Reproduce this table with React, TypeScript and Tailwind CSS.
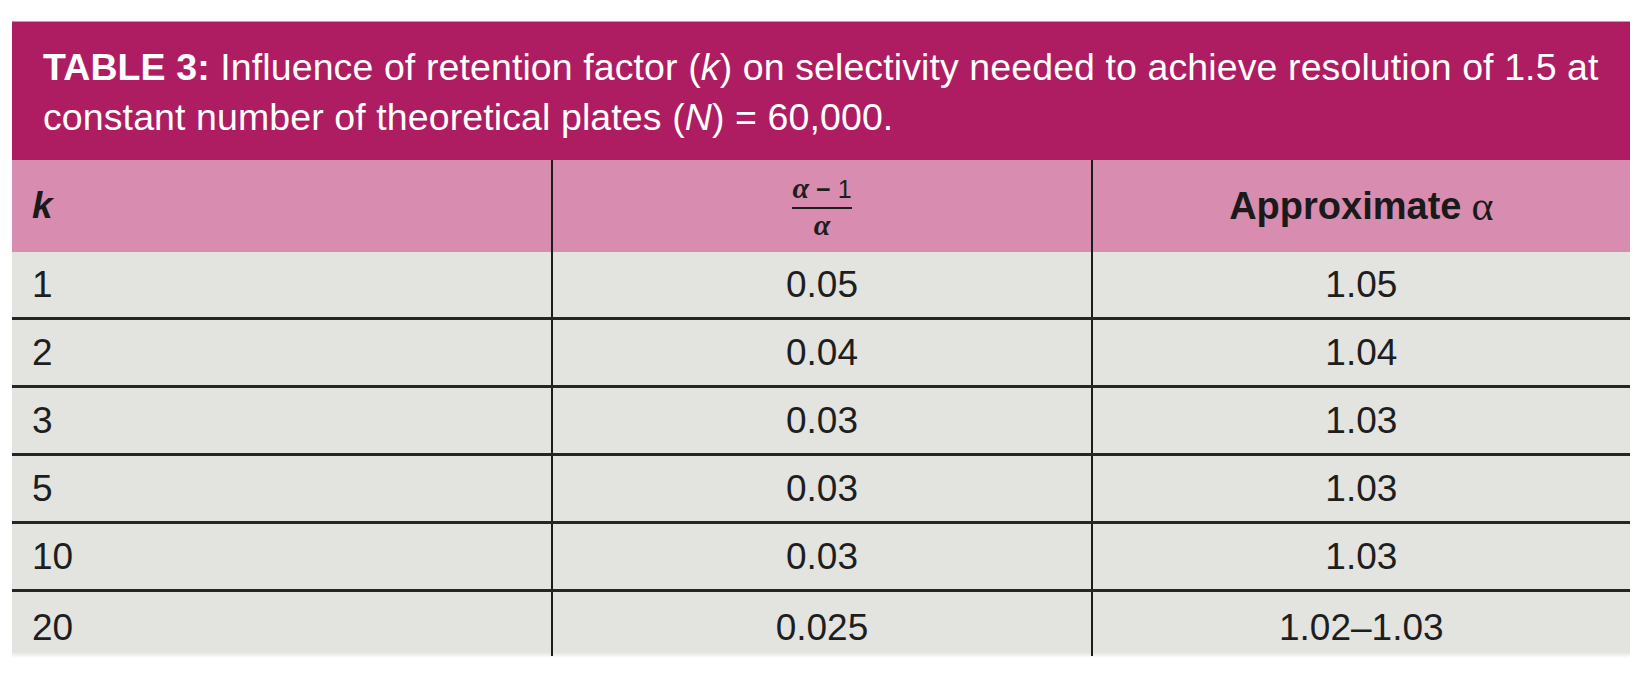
const rows = [
  { k: '1', ratio: '0.05', alpha: '1.05' },
  { k: '2', ratio: '0.04', alpha: '1.04' },
  { k: '3', ratio: '0.03', alpha: '1.03' },
  { k: '5', ratio: '0.03', alpha: '1.03' },
  { k: '10', ratio: '0.03', alpha: '1.03' },
  { k: '20', ratio: '0.025', alpha: '1.02–1.03' },
];

const sans = "font-['Liberation_Sans',Arial,sans-serif]";
const serif = "font-['Liberation_Serif','Times_New_Roman',serif]";

function Fraction() {
  return (
    <span className="inline-flex flex-col items-center leading-none text-[#1e1e1e]">
      <span className="flex items-baseline gap-[7px] border-b-2 border-[#1e1e1e] pb-[4px] text-[25px]">
        <span className={`${serif} text-[30px] font-bold italic`}>α</span>
        <span className="font-bold">−</span>
        <span>1</span>
      </span>
      <span className={`${serif} pt-[1px] text-[30px] font-bold italic`}>α</span>
    </span>
  );
}

export default function App() {
  return (
    <div className={`${sans} min-h-[685px] bg-white pl-[12px] pt-[21px]`}>
      <div className="w-[1618px]">
        <div className="h-[139px] whitespace-nowrap border-t border-[#d98fb3] bg-[#ae1c62] px-[31px] pt-[20px] text-[37.5px] leading-[50px] tracking-[0.1px] text-white">
          <b>TABLE 3:</b> Influence of retention factor (<i>k</i>) on selectivity needed to achieve resolution of 1.5 at
          <br />
          constant number of theoretical plates (<i>N</i>) = 60,000.
        </div>

        <div className="grid h-[92px] grid-cols-3 bg-[#d88cb0] text-[37px] text-[#1a1a1a]">
          <div className="flex items-center pl-5 font-bold italic">k</div>
          <div className="flex items-center justify-center border-l-2 border-[#1c1c1c]">
            <Fraction />
          </div>
          <div className="flex items-center justify-center border-l-2 border-[#1c1c1c]">
            <span className="text-[38px] font-bold">Approximate</span>
            <span className={`${serif} ml-[10px] text-[42px]`}>α</span>
          </div>
        </div>

        {rows.map((row, i) => {
          const last = i === rows.length - 1;
          const pad = last ? 'pt-[8px]' : '';
          return (
            <div
              key={row.k}
              className={`grid grid-cols-3 bg-[#e3e3df] text-[37px] text-[#1e1e1e] ${
                last ? 'h-[60px]' : 'h-[68px] border-b-[3px] border-[#262626]'
              }`}
            >
              <div className={`flex items-center pl-5 ${pad}`}>{row.k}</div>
              <div className={`flex items-center justify-center border-l-2 border-[#1c1c1c] ${pad}`}>{row.ratio}</div>
              <div className={`flex items-center justify-center border-l-2 border-[#1c1c1c] ${pad}`}>{row.alpha}</div>
            </div>
          );
        })}
        <div className="h-[6px] bg-gradient-to-b from-[#e3e3df] to-white" />
      </div>
    </div>
  );
}
